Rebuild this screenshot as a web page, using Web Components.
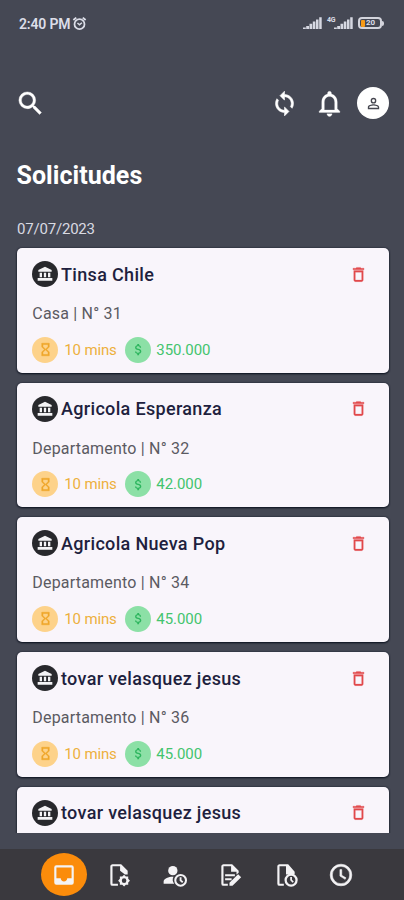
<!DOCTYPE html>
<html lang="es">
<head>
<meta charset="utf-8">
<title>Solicitudes</title>
<style>
html,body{margin:0;height:100%;background:#454854;font-family:Roboto,"Liberation Sans",sans-serif}
</style>
</head>
<body>
<solicitudes-app></solicitudes-app>
<script>
const ICONS = {
  search:'<path d="M15.5 14h-.79l-.28-.27A6.47 6.47 0 0 0 16 9.5 6.5 6.5 0 1 0 9.5 16c1.61 0 3.09-.59 4.23-1.57l.27.28v.79l5 4.99L20.49 19l-4.99-5zm-6 0C7.01 14 5 11.99 5 9.5S7.01 5 9.5 5 14 7.01 14 9.5 11.99 14 9.5 14z" stroke="currentColor" stroke-width=".3"/>',
  sync:'<path stroke="currentColor" stroke-width=".5" d="M12 4V1L8 5l4 4V6c3.31 0 6 2.69 6 6 0 1.01-.25 1.97-.7 2.8l1.46 1.46A7.93 7.93 0 0 0 20 12c0-4.42-3.58-8-8-8zm0 14c-3.31 0-6-2.69-6-6 0-1.01.25-1.97.7-2.8L5.24 7.74A7.93 7.93 0 0 0 4 12c0 4.42 3.58 8 8 8v3l4-4-4-4v3z"/>',
  bell:'<path d="M12 22c1.1 0 2-.9 2-2h-4c0 1.1.9 2 2 2zm6-6v-5c0-3.07-1.63-5.64-4.5-6.32V4c0-.83-.67-1.5-1.5-1.5s-1.5.67-1.5 1.5v.68C7.64 5.36 6 7.92 6 11v5l-2 2v1h16v-1l-2-2zm-2 1H8v-6c0-2.48 1.51-4.5 4-4.5s4 2.02 4 4.5v6z" stroke="currentColor" stroke-width=".2"/>',
  person:'<path d="M12 5.9a2.1 2.1 0 1 1 0 4.2 2.1 2.1 0 0 1 0-4.2m0 9c2.97 0 6.1 1.46 6.1 2.1v1.1H5.9V17c0-.64 3.13-2.1 6.1-2.1M12 4a4 4 0 1 0 0 8 4 4 0 0 0 0-8zm0 9c-2.67 0-8 1.34-8 4v3h16v-3c0-2.66-5.33-4-8-4z"/>',
  alarm:'<g fill="none" stroke="currentColor"><circle cx="12" cy="13" r="8" stroke-width="2.8"/><path d="M8.7 11.2 12 14l3.8-3.2" stroke-width="2.4"/><path d="M2.2 6.5 6.8 2.6M21.8 6.5l-4.6-3.9" stroke-width="3"/></g>',
  bank:'<path d="M12 1 2 6v2.500h20V6zM4 10v7h3.500v-7zm6.300 0v7h3.400v-7zM16.500 10v7H20v-7zM1 22h22v-4H1z"/>',
  trash:'<path stroke="currentColor" stroke-width=".3" d="M6 19c0 1.1.9 2 2 2h8c1.1 0 2-.9 2-2V7H6v12zM8 9h8v10H8V9zm7.5-5-1-1h-5l-1 1H5v2h14V4z"/>',
  hourglass:'<path d="M6 2v6l4 4-4 4v6h12v-6l-4-4 4-4V2H6zm10 14.5V20H8v-3.500l4-4 4 4zm-4-5-4-4V4h8v3.500l-4 4z" stroke="currentColor" stroke-width=".8"/>',
  dollar:'<path d="M11.800 10.900c-2.270-.590-3-1.200-3-2.150 0-1.090 1.010-1.850 2.700-1.850 1.780 0 2.440.850 2.500 2.100h2.210c-.070-1.720-1.120-3.300-3.210-3.810V3h-3v2.160c-1.940.420-3.500 1.680-3.500 3.610 0 2.310 1.910 3.460 4.700 4.130 2.500.600 3 1.480 3 2.410 0 .690-.490 1.790-2.700 1.790-2.060 0-2.870-.920-2.980-2.100h-2.200c.120 2.190 1.760 3.420 3.680 3.830V21h3v-2.150c1.950-.370 3.500-1.500 3.500-3.550 0-2.840-2.430-3.810-4.700-4.400z"/>',
  inbox:'<path d="M19 3H5a2 2 0 0 0-2 2v14a2 2 0 0 0 2 2h14a2 2 0 0 0 2-2V5a2 2 0 0 0-2-2zm0 12h-4c0 1.660-1.350 3-3 3s-3-1.340-3-3H5V5h14z"/>',
  docGear:'<path d="M11 22H6a2 2 0 0 1-2-2V4c0-1.100.9-2 2-2h8l6 6v3.500h-2.500L13 8V4H6v16h5z"/><path fill-rule="evenodd" d="m16.700 11.700 1.600 1.600h2.200v2.200l1.600 1.700-1.600 1.700v2.200h-2.200l-1.600 1.600-1.700-1.600h-2.200v-2.200l-1.600-1.700 1.600-1.700v-2.200H15zm0 3.400a2.100 2.100 0 1 0 0 4.200 2.100 2.100 0 0 0 0-4.200z"/>',
  personClock:'<circle cx="10" cy="8" r="4.300"/><path fill-rule="evenodd" d="M10.600 13.500H9.600C6.500 13.500 1.500 15 1.500 18v2h9.800a6 6 0 0 1-.7-6.500zM17.200 11a5.900 5.900 0 1 0 0 11.800 5.900 5.900 0 0 0 0-11.800zm0 1.900a4 4 0 1 1 0 8 4 4 0 0 1 0-8z"/><path d="M16.300 14h1.700v2.600l1.700 1.500-1.100 1.200-2.300-2z"/>',
  docEdit:'<path d="M10 22H6a2 2 0 0 1-2-2V4c0-1.100.9-2 2-2h8l6 6v2l-2 1.500V9h-5V4H6v16h4z"/><path d="M7.500 11.300h9v1.900h-9zM7.500 15h6v1.900h-6zM11.500 19.200l8-8 2.800 2.800-8 8h-2.800z"/>',
  docClock:'<path d="M10 22H6a2 2 0 0 1-2-2V4c0-1.100.9-2 2-2h8l6 7v2.500H12V4H6v16h4z"/><path fill-rule="evenodd" d="M16.700 10.600a6.100 6.100 0 1 0 0 12.200 6.100 6.100 0 0 0 0-12.200zm0 2.100a4 4 0 1 1 0 8 4 4 0 0 1 0-8z"/><path d="M15.900 13.800h1.600v2.500l1.700 1.700-1.100 1.100-2.200-2.200z"/>',
  clock:'<path d="M12 2a10 10 0 1 0 0 20 10 10 0 0 0 0-20zm0 18a8 8 0 1 1 0-16 8 8 0 0 1 0 16zm.7-13H11v6l4.800 3 .8-1.400-3.900-2.300z" stroke="currentColor" stroke-width=".5"/>'
};
class UiIcon extends HTMLElement{
  connectedCallback(){
    const s=this.getAttribute('size')||24;
    this.attachShadow({mode:'open'}).innerHTML=`<style>:host{display:block;flex:none;width:${s}px;height:${s}px}svg{display:block;width:100%;height:100%}</style><svg viewBox="0 0 24 24" fill="currentColor">${ICONS[this.getAttribute('name')]}</svg>`;
  }
}
customElements.define('ui-icon',UiIcon);

class SignalBars extends HTMLElement{
  connectedCallback(){
    this.attachShadow({mode:'open'}).innerHTML=`<style>:host{display:block;flex:none}svg{display:block}</style>
    <svg width="19" height="12" fill="#d6d8e2"><path d="M0 12V10.500h2.800v1.500zM3.200 12V8.900h2.800V12zM6.500 12V6.800h2.700V12zM9.800 12V4.600h2.600V12zM13 12V2.600h2.500V12zM16.200 12V.3h2.500V12z"/></svg>`;
  }
}
customElements.define('signal-bars',SignalBars);

class StatusBar extends HTMLElement{
  connectedCallback(){
    this.attachShadow({mode:'open'}).innerHTML=`<style>
    :host{display:flex;height:48px;box-sizing:border-box;padding:0 20px 2px 19px;align-items:center;color:#dcdee8}
    .time{font-size:14px;font-weight:600;letter-spacing:-.15px;padding-top:2px}
    ui-icon{margin-left:2px;margin-top:0}
    .right{margin-left:auto;display:flex;align-items:center}
    .net{font-size:7px;line-height:6px;font-weight:700;width:9px;height:12px;margin-left:5px;margin-right:-2px;letter-spacing:-.2px}
    .bat{display:flex;align-items:center;margin-left:5px}
    .cell{box-sizing:border-box;width:24px;height:12px;border:2px solid #d3d4dc;border-radius:4px;padding:0 1px;display:flex;align-items:center}
    .fill{width:4px;height:7px;background:#f79a16;border-radius:1px}
    .pct{font-size:8px;line-height:8px;font-weight:700;margin-left:1px}
    .tip{width:2px;height:5px;background:#d3d4dc;border-radius:0 2px 2px 0}
    </style><span class="time">2:40 PM</span><ui-icon name="alarm" size="15"></ui-icon>
    <div class="right"><signal-bars></signal-bars><span class="net">4G</span><signal-bars></signal-bars>
    <div class="bat"><div class="cell"><i class="fill"></i><span class="pct">20</span></div><i class="tip"></i></div></div>`;
  }
}
customElements.define('status-bar',StatusBar);

class TopActions extends HTMLElement{
  connectedCallback(){
    this.attachShadow({mode:'open'}).innerHTML=`<style>
    :host{display:flex;align-items:center;height:32px;margin-top:39px;padding:0 15px;color:#fff}
    .sp{flex:1}
    .av{width:32px;height:32px;border-radius:50%;background:#fff;color:#45464f;display:grid;place-items:center;margin-left:12px}
    </style><ui-icon name="search" size="31"></ui-icon><span class="sp"></span><ui-icon name="sync" size="27"></ui-icon><ui-icon name="bell" size="31" style="margin-left:16px"></ui-icon><div class="av"><ui-icon name="person" size="17"></ui-icon></div>`;
  }
}
customElements.define('top-actions',TopActions);

class RequestCard extends HTMLElement{
  connectedCallback(){
    this.attachShadow({mode:'open'}).innerHTML=`<style>
    :host{display:block;flex:none;box-sizing:border-box;height:124.700px;padding:12.500px 16px 0 15.300px;background:#f9f5fb;border-radius:5px;box-shadow:0 1px 2px #0d1320,0 0 2px #171d2b}
    .head,.meta{display:flex;align-items:center}
    .head{height:27px;color:#211f3e;font-size:18px;font-weight:500;letter-spacing:.33px}
    .dot{width:26px;height:26px;border-radius:50%;display:grid;place-items:center;flex:none}
    .bank{background:#28282c;color:#f4f3f5;margin-right:2.700px}
    .trash{margin-left:auto;margin-right:4.500px;color:#e24a4c}
    .sub{height:24px;line-height:24px;margin-top:14.500px;font-size:16px;color:#5b5a62;letter-spacing:.2px}
    .meta{height:26px;margin-top:10.500px;font-size:15px}
    .time{background:#fdd28a;color:#efa62b;margin-right:6px}
    .cash{background:#8ce0a6;color:#2db55e;margin:0 5px 0 9.500px}
    .t{color:#edb03d;letter-spacing:-.15px;width:51.500px;white-space:nowrap}.c{color:#43c46e;letter-spacing:-.05px}
    </style>
    <div class="head"><span class="dot bank"><ui-icon name="bank" size="16"></ui-icon></span><slot name="name"></slot><ui-icon class="trash" name="trash" size="19"></ui-icon></div>
    <div class="sub"><slot name="place"></slot></div>
    <div class="meta"><span class="dot time"><ui-icon name="hourglass" size="15"></ui-icon></span><span class="t"><slot name="time"></slot></span><span class="dot cash"><ui-icon name="dollar" size="15"></ui-icon></span><span class="c"><slot name="price"></slot></span></div>`;
  }
}
customElements.define('request-card',RequestCard);

class BottomNav extends HTMLElement{
  connectedCallback(){
    this.attachShadow({mode:'open'}).innerHTML=`<style>
    :host{display:flex;flex:none;height:51.500px;background:#3a393e;color:#f4f3f5;padding:0 35px 0 36px;justify-content:space-between;box-sizing:border-box}
    .item{width:56px;display:grid;place-items:center;padding-top:1px}
    .on{background:#fb8c0b;width:46px;height:43px;border-radius:50%;display:grid;place-items:center}
    </style><div class="item"><div class="on"><ui-icon name="inbox" size="26"></ui-icon></div></div>
    ${['docGear','personClock','docEdit','docClock','clock'].map(n=>`<div class="item"><ui-icon name="${n}" size="26"></ui-icon></div>`).join('')}`;
  }
}
customElements.define('bottom-nav',BottomNav);

class SolicitudesApp extends HTMLElement{
  connectedCallback(){
    const rows=[['Tinsa Chile','Casa | N° 31','350.000'],['Agricola Esperanza','Departamento | N° 32','42.000'],['Agricola Nueva Pop','Departamento | N° 34','45.000'],['tovar velasquez jesus','Departamento | N° 36','45.000'],['tovar velasquez jesus','','']];
    this.attachShadow({mode:'open'}).innerHTML=`<style>
    :host{display:flex;flex-direction:column;width:100%;height:900px;overflow:hidden;background:#454854}
    h1{margin:41px 0 0 16.500px;font-size:25px;line-height:32px;font-weight:700;color:#fff;letter-spacing:.05px}
    .date{margin:27px 0 0 17px;font-size:15px;line-height:20px;color:#d9dae2;letter-spacing:-.2px}
    .list{display:flex;flex-direction:column;gap:10px;padding:9px 15.500px 0 17px;height:584.700px;overflow:hidden;flex:none}
    bottom-nav{margin-top:auto}
    </style><status-bar></status-bar><top-actions></top-actions><h1>Solicitudes</h1><div class="date">07/07/2023</div>
    <div class="list">${rows.map(r=>`<request-card><span slot="name">${r[0]}</span><span slot="place">${r[1]}</span>${r[2]?`<span slot="time">10 mins</span><span slot="price">${r[2]}</span>`:''}</request-card>`).join('')}</div>
    <bottom-nav></bottom-nav>`;
  }
}
customElements.define('solicitudes-app',SolicitudesApp);
</script>
</body>
</html>
